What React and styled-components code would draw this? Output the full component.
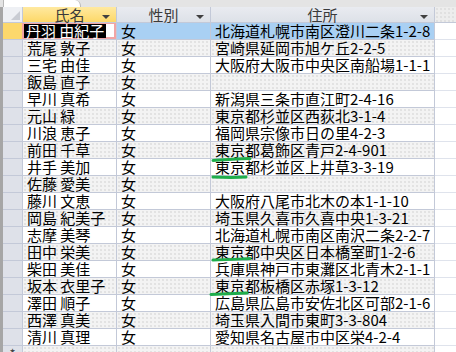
import styled, { createGlobalStyle, css } from 'styled-components';

const GlobalStyle = createGlobalStyle`
  html, body {
    margin: 0;
    padding: 0;
    background: #ffffff;
  }
  body {
    font-family: "Noto Sans CJK JP", "Liberation Sans", sans-serif;
  }
`;

const rows = [
  ['丹羽 由紀子', '北海道札幌市南区澄川二条1-2-8'],
  ['荒尾 敦子', '宮崎県延岡市旭ケ丘2-2-5'],
  ['三宅 由佳', '大阪府大阪市中央区南船場1-1-1'],
  ['飯島 直子', ''],
  ['早川 真希', '新潟県三条市直江町2-4-16'],
  ['元山 緑', '東京都杉並区西荻北3-1-4'],
  ['川浪 恵子', '福岡県宗像市日の里4-2-3'],
  ['前田 千草', '東京都葛飾区青戸2-4-901'],
  ['井手 美加', '東京都杉並区上井草3-3-19'],
  ['佐藤 愛美', ''],
  ['藤川 文恵', '大阪府八尾市北木の本1-1-10'],
  ['岡島 紀美子', '埼玉県久喜市久喜中央1-3-21'],
  ['志摩 美琴', '北海道札幌市南区南沢二条2-2-7'],
  ['田中 栄美', '東京都中央区日本橋室町1-2-6'],
  ['柴田 美佳', '兵庫県神戸市東灘区北青木2-1-1'],
  ['坂本 衣里子', '東京都板橋区赤塚1-3-12'],
  ['澤田 順子', '広島県広島市安佐北区可部2-1-6'],
  ['西澤 真美', '埼玉県入間市東町3-3-804'],
  ['清川 真理', '愛知県名古屋市中区栄4-2-4'],
];

const dotted = css`
  background-color: #f3f3f3;
  background-image: radial-gradient(#d9d9d9 0.6px, transparent 0.9px);
  background-size: 4px 4px;
`;

const Screen = styled.div`
  width: 456px;
  height: 352px;
  overflow: hidden;
  background: #e9e9e9;
  position: relative;
`;

const TabStrip = styled.div`
  height: 7px;
  display: flex;
  align-items: flex-end;
  padding-left: 3px;
  background: #e4e4e4;
`;

const Tab = styled.div`
  width: 76px;
  height: 7px;
  background: #ffffff;
  border-left: 1px solid #b9b9b9;
  border-right: 1px solid #b9b9b9;
  border-top-right-radius: 6px;
`;

const Sheet = styled.div`
  display: grid;
  grid-template-columns: 20px 94px 94px 224px 1fr;
  grid-auto-rows: 17px;
  grid-template-rows: 16px;
  border-left: 3px solid #a6a6a6;
  font-size: 15px;
  line-height: 16px;
  color: #000;
`;

const HeadCell = styled.div`
  position: relative;
  display: flex;
  align-items: center;
  justify-content: center;
  border-right: 1px solid #c3c9d8;
  border-bottom: 1px solid #c3c9d8;
  color: #3a3a3a;
  background: ${(p) =>
    p.$active
      ? 'linear-gradient(#ffe9a0, #fdd868)'
      : 'linear-gradient(#e9ebf0, #dde1e8)'};
`;

const CornerCell = styled(HeadCell)`
  background: #eef0f4;
`;

const CornerMark = styled.span`
  position: absolute;
  right: 2px;
  bottom: 2px;
  width: 0;
  height: 0;
  border-left: 9px solid transparent;
  border-bottom: 9px solid #c9ccd3;
`;

const Filler = styled.div`
  ${dotted};
  background-color: #ededed;
  border-bottom: 1px solid #c3c9d8;
`;

const SortArrow = styled.span`
  position: absolute;
  right: 6px;
  top: 8px;
  width: 0;
  height: 0;
  border-left: 4px solid transparent;
  border-right: 4px solid transparent;
  border-top: 4px solid #404040;
`;

const Selector = styled.div`
  border-right: 1px solid #c3c9d8;
  border-bottom: 1px solid #c3c9d8;
  background: ${(p) => (p.$current ? '#fcd86c' : '#dee1e9')};
  color: #444;
  font-size: 13px;
  display: flex;
  align-items: flex-end;
  justify-content: center;
`;

const Cell = styled.div`
  display: flex;
  align-items: center;
  padding-left: 4px;
  white-space: nowrap;
  border-right: 1px solid #c3c9d8;
  border-bottom: 1px solid #c3c9d8;
  ${(p) => (p.$alt ? dotted : 'background: #ffffff;')}
  ${(p) => p.$selected && 'background: #a9d0f3;'}
`;

const FocusCell = styled(Cell)`
  background: #ffffff;
  padding-left: 2px;
  box-shadow: inset 0 0 0 2px #f2a5a5;
  margin: -1px 0 0 -1px;
`;

const Highlight = styled.span`
  background: #000000;
  color: #ffffff;
  padding: 0 2px;
  line-height: 14px;
`;

const Spare = styled.div`
  border-bottom: 1px solid #dfe3ec;
  background: #ffffff;
`;

const Marks = styled.svg`
  position: absolute;
  left: 0;
  top: 0;
  pointer-events: none;
`;

export default function App() {
  return (
    <Screen>
      <GlobalStyle />
      <TabStrip>
        <Tab />
      </TabStrip>
      <Sheet>
        <CornerCell>
          <CornerMark />
        </CornerCell>
        <HeadCell $active>
          氏名
          <SortArrow />
        </HeadCell>
        <HeadCell>
          性別
          <SortArrow />
        </HeadCell>
        <HeadCell>
          住所
          <SortArrow />
        </HeadCell>
        <Filler />

        {rows.map(([name, address], i) => {
          const alt = i % 2 === 1;
          const first = i === 0;
          return [
            <Selector key={`s${i}`} $current={first} />,
            first ? (
              <FocusCell key={`n${i}`}>
                <Highlight>{name}</Highlight>
              </FocusCell>
            ) : (
              <Cell key={`n${i}`} $alt={alt}>
                {name}
              </Cell>
            ),
            <Cell key={`g${i}`} $alt={alt} $selected={first}>
              女
            </Cell>,
            <Cell key={`a${i}`} $alt={alt} $selected={first}>
              {address}
            </Cell>,
            <Spare key={`f${i}`} />,
          ];
        })}

        <Selector>*</Selector>
        <Cell $alt />
        <Cell $alt />
        <Cell $alt />
        <Spare />
      </Sheet>

      <Marks width="456" height="352" viewBox="0 0 456 352">
        <g fill="none" stroke="#1fae4b" strokeWidth="3" strokeLinecap="round">
          <path d="M213 160.5 C 225 160, 240 158.5, 250 158.5" />
          <path d="M213 177 C 225 177.5, 238 177.5, 246 177" />
          <path d="M213 260 C 225 260, 240 259, 250 258.5" />
          <path d="M211 294.5 C 222 294, 235 293.5, 247 293" />
        </g>
      </Marks>
    </Screen>
  );
}
